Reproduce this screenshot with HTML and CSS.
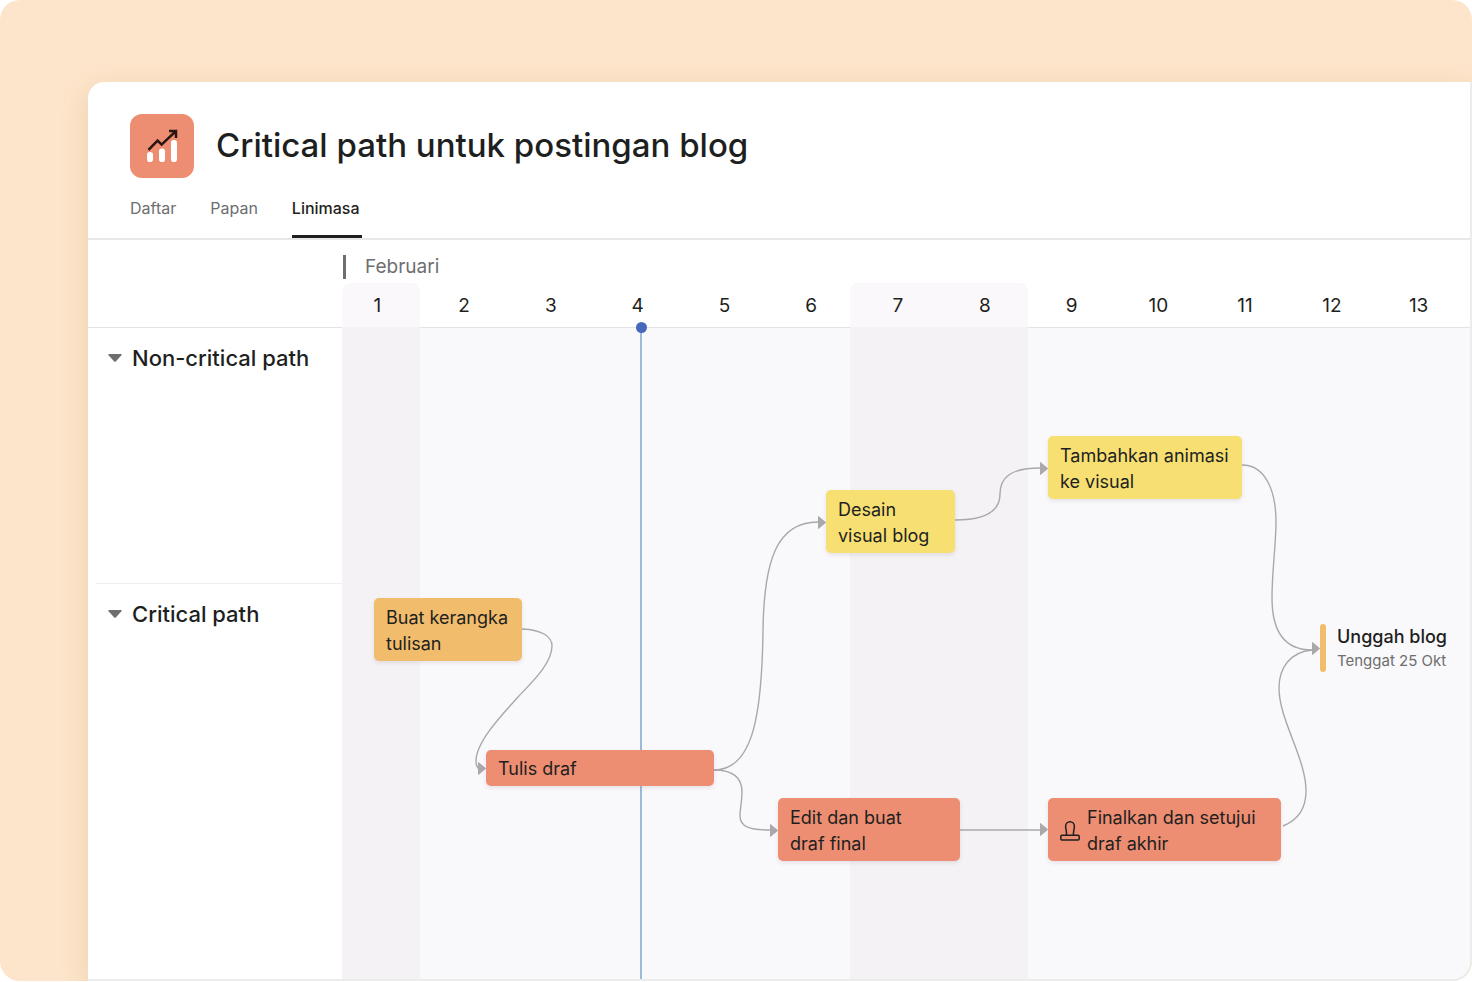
FILE: index.html
```
<!DOCTYPE html>
<html lang="id">
<head>
  <meta charset="UTF-8">
  <meta name="viewport" content="width=device-width, initial-scale=1.0">
  <title>Critical path untuk postingan blog</title>
  <link rel="stylesheet" href="styles.css">
</head>
<body>
  <div class="stage">
    <main class="panel">
      <header class="project">
        <div class="project-title">
          <svg class="project-icon" viewBox="0 0 64 64" aria-hidden="true">
            <rect width="64" height="64" rx="12" fill="#ed8d72"/>
            <g fill="#fff">
              <rect x="17" y="38" width="6" height="10" rx="2.8"/>
              <rect x="29" y="34.5" width="6" height="13.5" rx="2.8"/>
              <rect x="41" y="26" width="6" height="22" rx="2.8"/>
            </g>
            <path d="M18.5 35.8 27.6 26.6 31.6 30.6 46 17M39 17H46V24" fill="none" stroke="#2a1512" stroke-width="2.5"/>
          </svg>
          <h1>Critical path untuk postingan blog</h1>
        </div>
        <nav class="tabs">
          <a href="#daftar">Daftar</a>
          <a href="#papan">Papan</a>
          <a href="#linimasa" class="active">Linimasa</a>
        </nav>
      </header>

      <div class="timeline">
        <aside class="sections">
          <div class="sections-head"></div>
          <section>
            <button class="toggle" type="button">
              <svg viewBox="0 0 14 8" aria-hidden="true"><path d="M1 0h12q1 .3.4 1.2L7.8 7.4q-.8.8-1.6 0L.6 1.2Q0 .3 1 0z"/></svg>
              Non-critical path
            </button>
          </section>
          <section>
            <button class="toggle" type="button">
              <svg viewBox="0 0 14 8" aria-hidden="true"><path d="M1 0h12q1 .3.4 1.2L7.8 7.4q-.8.8-1.6 0L.6 1.2Q0 .3 1 0z"/></svg>
              Critical path
            </button>
          </section>
        </aside>

        <div class="chart">
          <div class="shade first"></div>
          <div class="shade weekend"></div>

          <div class="calendar">
            <div class="month">Februari</div>
            <ol class="days">
              <li>1</li><li>2</li><li>3</li><li>4</li><li>5</li><li>6</li><li>7</li>
              <li>8</li><li>9</li><li>10</li><li>11</li><li>12</li><li>13</li>
            </ol>
          </div>

          <div class="canvas">
            <div class="today"></div>

            <!-- dependencies between tasks -->
            <svg class="links" viewBox="0 0 1128 652" aria-hidden="true">
              <g fill="none" stroke="#aaa8aa" stroke-width="1.4">
                <path d="M180 301C201 302 210 309 210 318C210 336 188 356 176 369C156 391 134 415 134 433C134 437 135 440 138 442"/>
                <path d="M372 442C411 442 420 387 421 302C422 232 435 194 476 194"/>
                <path d="M372 442C392 442 400 450 400 464C400 474 398 480 398 488C398 499 408 502 428 502"/>
                <path d="M613 192C646 192 658 182 658 166C658 150 668 140 698 140"/>
                <path d="M618 502H698"/>
                <path d="M900 137C923 137 934 162 934 194C934 217 930 242 930 270C930 304 943 322 970 322"/>
                <path d="M941 498C956 492 964 480 964 463C964 430 937 392 937 360C937 340 948 324 970 322"/>
              </g>
              <g fill="#aaa8aa" stroke="#aaa8aa" stroke-linejoin="round">
                <path d="M136.5 434.5v12l7-6z"/>
                <path d="M476.5 188.5v12l7-6z"/>
                <path d="M428.5 496.5v12l7-6z"/>
                <path d="M698.5 134.5v12l7-6z"/>
                <path d="M698.5 495.5v12l7-6z"/>
                <path d="M970.5 314.5v12l7-6z"/>
              </g>
            </svg>

            <div class="task yellow animasi">Tambahkan animasi<br>ke visual</div>
            <div class="task yellow desain">Desain<br>visual blog</div>
            <div class="task orange kerangka">Buat kerangka<br>tulisan</div>
            <div class="task red draf">Tulis draf</div>
            <div class="task red edit">Edit dan buat<br>draf final</div>
            <div class="task red final">
              <svg class="stamp" viewBox="0 0 20 20" aria-hidden="true">
                <g fill="none" stroke="#1e1f21" stroke-width="1.5">
                  <rect x=".8" y="14.3" width="18.4" height="4.7" rx="1.2"/>
                  <path d="M6.5 14.3C6.9 10.5 5.6 8 5.6 5.2a4.4 4.4 0 0 1 8.8 0C14.4 8 13.1 10.5 13.5 14.3"/>
                </g>
              </svg>
              <span>Finalkan dan setujui<br>draf akhir</span>
            </div>
            <div class="milestone">
              <strong>Unggah blog</strong>
              <small>Tenggat 25 Okt</small>
            </div>
          </div>
        </div>
      </div>
    </main>
  </div>
</body>
</html>
```
FILE: styles.css
```
* { box-sizing: border-box; }
body { margin: 0; background: #fff; color: #1e1f21; font-family: Inter, "Liberation Sans", sans-serif; }

.stage { display: flex; min-height: calc(100vh - 1px); padding: 82px 0 0 88px; background: #fde5cb; border-radius: 20px; overflow: hidden; }
.panel { flex: 1; min-width: 0; display: flex; flex-direction: column; background: #fff; border-right: 2px solid #ececec; border-bottom: 2px solid #ececec; border-radius: 16px 0 20px 0; box-shadow: 0 8px 28px rgba(150, 120, 40, 0.18); overflow: hidden; }

.project { padding: 32px 42px 0; border-bottom: 2px solid #e8e8e8; }
.project-title { display: flex; align-items: center; gap: 22px; }
.project-icon { width: 64px; height: 64px; }
h1 { margin: 0; padding-bottom: 2px; font-size: 33px; line-height: 40px; font-weight: 500; white-space: nowrap; }
.tabs { display: flex; gap: 32px; margin-top: 20px; }
.tabs a { height: 40px; padding-right: 2px; color: #6d6e6f; font-size: 16px; line-height: 20px; text-decoration: none; }
.tabs .active { color: #1e1f21; font-weight: 500; border-bottom: 3px solid #1e1f21; }

.timeline { flex: 1; display: grid; grid-template-columns: 254px 1fr; }
.sections { display: flex; flex-direction: column; }
.sections-head { height: 88px; border-bottom: 1px solid #e3e2e4; }
.sections section { height: 255px; margin-left: 8px; padding: 14px 12px; }
.sections section + section { flex: 1; border-top: 1px solid #efeff0; }
.toggle { display: flex; align-items: center; gap: 10px; padding: 0; border: 0; background: none; color: inherit; font: 500 22px/32px Inter, "Liberation Sans", sans-serif; white-space: nowrap; cursor: pointer; }
.toggle svg { width: 14px; height: 8px; fill: #6d6e6f; }

.chart { position: relative; display: flex; flex-direction: column; min-width: 0; background: linear-gradient(#fff 87px, #e3e2e4 87px, #e3e2e4 88px, #f9f8fa 88px); }
.calendar { position: relative; height: 88px; }
.month { margin: 15px 0 0 1px; height: 24px; padding-left: 19px; border-left: 3px solid #6d6e6f; color: #6d6e6f; font-size: 19px; line-height: 24px; }
.days { display: grid; grid-template-columns: repeat(13, 1fr); margin: 15px 8px 0 -8px; padding: 0; list-style: none; font-size: 19px; line-height: 24px; text-align: center; }

/* non-working days, lighter behind the calendar head */
.shade { position: absolute; top: 43px; bottom: 0; border-radius: 8px 8px 0 0; background: linear-gradient(#faf8fb 44px, #f4f2f5 44px); }
.shade.first { left: 0; width: 78px; }
.shade.weekend { left: 508px; width: 178px; }

.canvas { position: relative; flex: 1; min-height: 560px; }
.links { position: absolute; top: 0; left: 0; width: 1128px; height: 652px; }
.today { position: absolute; top: 0; bottom: 0; left: 298px; width: 2px; background: #9dbad8; }
.today::before { content: ""; position: absolute; top: -6px; left: -4px; width: 11px; height: 11px; border-radius: 50%; background: #4668bd; }

.task { position: absolute; padding: 7px 12px 4px; border-radius: 5px; font-size: 18px; line-height: 26px; white-space: nowrap; box-shadow: 0 2px 4px rgba(60, 40, 60, 0.1); }
.yellow { background: #f8df72; }
.orange { background: #f1bd6c; }
.red { background: #ed8d72; }
.animasi { left: 706px; top: 108px; width: 194px; height: 63px; }
.desain { left: 484px; top: 162px; width: 129px; height: 63px; }
.kerangka { left: 32px; top: 270px; width: 148px; height: 63px; }
.draf { left: 144px; top: 422px; width: 228px; height: 36px; padding-top: 6px; }
.edit { left: 436px; top: 470px; width: 182px; height: 63px; }
.final { display: flex; align-items: center; gap: 7px; left: 706px; top: 470px; width: 233px; height: 63px; }
.stamp { width: 20px; height: 20px; }

.milestone { position: absolute; left: 978px; top: 296px; height: 48px; padding-left: 17px; white-space: nowrap; }
.milestone::before { content: ""; position: absolute; top: 0; bottom: 0; left: 0; width: 6px; border-radius: 3px; background: #f1bd6c; }
.milestone strong { display: block; font-size: 18px; line-height: 26px; font-weight: 500; }
.milestone small { display: block; color: #6d6e6f; font-size: 15px; line-height: 22px; }
```
